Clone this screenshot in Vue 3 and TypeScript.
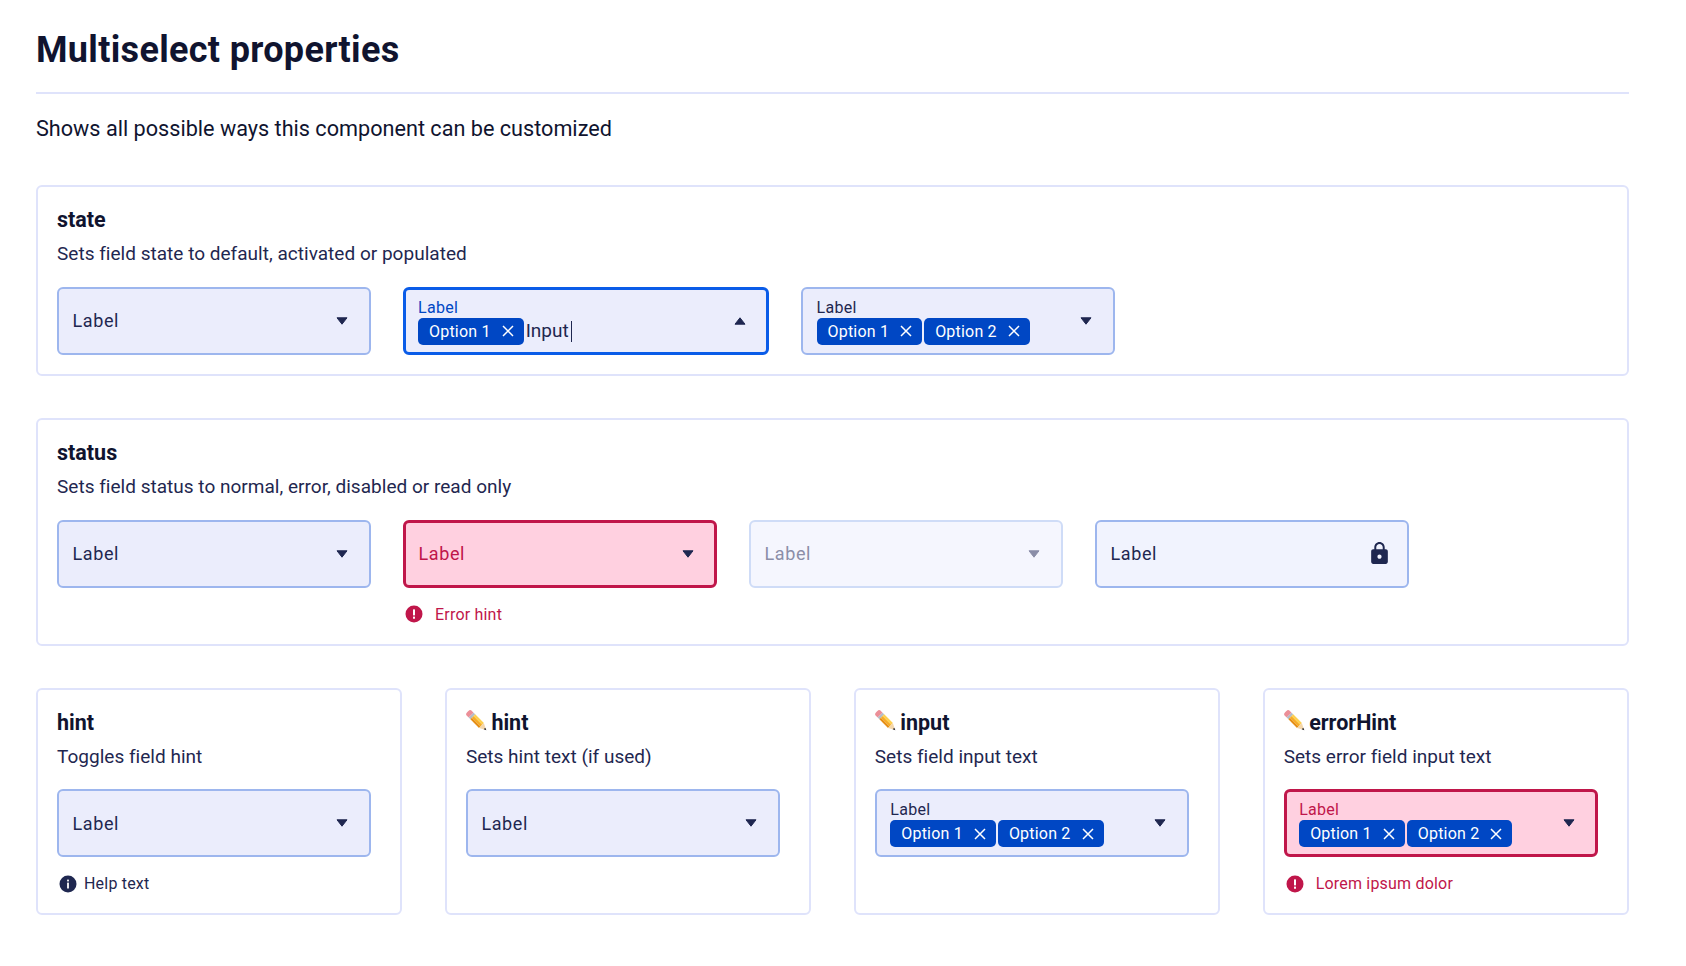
<script setup lang="ts">
// Property sheet for the multiselect field: every card is data, one template draws them all.
type Variant = 'default' | 'active' | 'error' | 'disabled' | 'readonly'

interface Field {
  variant?: Variant
  wide?: boolean
  tags?: string[]
  input?: string
  hint?: { text: string; kind: 'help' | 'error' }
}

interface Card {
  title: string
  desc: string
  pencil?: boolean
  fields: Field[]
}

const topCards: Card[] = [
  {
    title: 'state',
    desc: 'Sets field state to default, activated or populated',
    fields: [
      {},
      { variant: 'active', wide: true, tags: ['Option 1'], input: 'Input' },
      { tags: ['Option 1', 'Option 2'] },
    ],
  },
  {
    title: 'status',
    desc: 'Sets field status to normal, error, disabled or read only',
    fields: [
      {},
      { variant: 'error', hint: { text: 'Error hint', kind: 'error' } },
      { variant: 'disabled' },
      { variant: 'readonly' },
    ],
  },
]

const smallCards: Card[] = [
  {
    title: 'hint',
    desc: 'Toggles field hint',
    fields: [{ hint: { text: 'Help text', kind: 'help' } }],
  },
  { title: 'hint', desc: 'Sets hint text (if used)', pencil: true, fields: [{}] },
  {
    title: 'input',
    desc: 'Sets field input text',
    pencil: true,
    fields: [{ tags: ['Option 1', 'Option 2'] }],
  },
  {
    title: 'errorHint',
    desc: 'Sets error field input text',
    pencil: true,
    fields: [
      {
        variant: 'error',
        tags: ['Option 1', 'Option 2'],
        hint: { text: 'Lorem ipsum dolor', kind: 'error' },
      },
    ],
  },
]

const groups = [
  { cls: 'stack', cards: topCards },
  { cls: 'grid', cards: smallCards },
]
</script>

<template>
  <main class="page">
    <h1 class="heading">Multiselect properties</h1>
    <p class="lead">Shows all possible ways this component can be customized</p>

    <div v-for="group in groups" :key="group.cls" :class="group.cls">
      <section v-for="card in group.cards" :key="card.desc" class="card">
        <h2 class="card-title">
          <svg v-if="card.pencil" class="pencil" viewBox="0 0 20 20" aria-hidden="true">
            <g transform="rotate(45 10 10)">
              <path d="M-.2 6.8H2.6V13.2H-.2C-1.4 13.2-2 12.2-2 10S-1.4 6.8-.2 6.8Z" fill="#ec8f98" />
              <rect x="2.6" y="6.8" width="2.2" height="6.4" fill="#b3bcc8" />
              <rect x="4.8" y="6.8" width="11.4" height="2.2" fill="#fdd04e" />
              <rect x="4.8" y="9" width="11.4" height="2.2" fill="#f7ac24" />
              <rect x="4.8" y="11.2" width="11.4" height="2" fill="#e58e14" />
              <path d="M16.2 6.8 22.2 10 16.2 13.2Z" fill="#f4d7ac" />
              <path d="M20.2 8.9 22.6 10 20.2 11.1Z" fill="#23232c" />
            </g>
          </svg>
          <span>{{ card.title }}</span>
        </h2>
        <p class="card-desc">{{ card.desc }}</p>

        <div class="fields">
          <div v-for="(field, i) in card.fields" :key="i" class="field-wrap" :class="{ wide: field.wide }">
            <div class="field" :class="field.variant ?? 'default'">
              <div class="field-body" :class="{ populated: field.tags }">
                <span class="label" :class="{ small: field.tags }">Label</span>
                <div v-if="field.tags" class="tags">
                  <span v-for="tag in field.tags" :key="tag" class="tag">
                    {{ tag }}
                    <svg class="tag-x" viewBox="0 0 12 12" aria-hidden="true">
                      <path d="M1 1 11 11M11 1 1 11" />
                    </svg>
                  </span>
                  <span v-if="field.input" class="input">{{ field.input }}<i class="caret"></i></span>
                </div>
              </div>
              <svg v-if="field.variant === 'readonly'" class="lock" viewBox="0 0 24 24" aria-hidden="true">
                <path d="M18 8h-1V6c0-2.76-2.24-5-5-5S7 3.24 7 6v2H6c-1.1 0-2 .9-2 2v10c0 1.1.9 2 2 2h12c1.1 0 2-.9 2-2V10c0-1.1-.9-2-2-2zm-6 9c-1.1 0-2-.9-2-2s.9-2 2-2 2 .9 2 2-.9 2-2 2zm3.1-9H8.9V6c0-1.71 1.39-3.1 3.1-3.1 1.71 0 3.1 1.39 3.1 3.1v2z" />
              </svg>
              <svg v-else class="arrow" :class="{ up: field.variant === 'active' }" viewBox="0 0 12 8" aria-hidden="true">
                <path d="M1 .8h10L6 7.2Z" />
              </svg>
            </div>
            <div v-if="field.hint" class="hint" :class="field.hint.kind">
              <svg class="hint-icon" viewBox="0 0 18 18" aria-hidden="true">
                <circle cx="9" cy="9" r="8.5" />
                <template v-if="field.hint.kind === 'error'">
                  <rect x="8" y="4.2" width="2" height="6.2" rx=".6" fill="#fff" />
                  <rect x="8" y="11.6" width="2" height="2.2" rx=".6" fill="#fff" />
                </template>
                <template v-else>
                  <rect x="8.1" y="7.6" width="1.8" height="6" rx=".4" fill="#fff" />
                  <rect x="8.1" y="4.6" width="1.8" height="1.9" rx=".4" fill="#fff" />
                </template>
              </svg>
              <span>{{ field.hint.text }}</span>
            </div>
          </div>
        </div>
      </section>
    </div>
  </main>
</template>

<style scoped>
.page {
  box-sizing: border-box;
  width: 1629px;
  min-height: 966px;
  padding: 28px 0 0 36px;
  font-family: Roboto, "Liberation Sans", sans-serif;
  color: #1f2750;
  background: #fff;
}

.heading {
  margin: 0;
  padding-bottom: 20px;
  border-bottom: 2px solid #dfe3fb;
  font-size: 36px;
  line-height: 44px;
  font-weight: 700;
  letter-spacing: 0.33px;
  color: #10142f;
}

.lead {
  margin: 21px 0 42px;
  font-size: 21.65px;
  line-height: 28px;
  color: #10142f;
}

.stack {
  display: flex;
  flex-direction: column;
  gap: 42px;
  margin-bottom: 42px;
}

.grid {
  display: grid;
  grid-template-columns: repeat(4, 1fr);
  gap: 42.5px;
}

.card {
  box-sizing: border-box;
  min-height: 191px;
  padding: 20px 19px 19px;
  border: 2px solid #dfe3fb;
  border-radius: 6px;
  background: #fff;
}

.grid .card {
  height: 227px;
}

.card-title {
  display: flex;
  align-items: center;
  gap: 4px;
  margin: 0;
  font-size: 21.5px;
  line-height: 26px;
  font-weight: 700;
  color: #10142f;
}

.pencil {
  width: 21.5px;
  height: 21.5px;
  flex: none;
  margin-top: -4px;
}

.card-desc {
  margin: 8px 0 20px;
  font-size: 19px;
  line-height: 25.5px;
  letter-spacing: 0.02px;
}

.fields {
  display: flex;
  gap: 32px;
}

.field-wrap {
  width: 314px;
  flex: none;
}

.field-wrap.wide {
  width: 366px;
}

.field {
  box-sizing: border-box;
  display: flex;
  align-items: center;
  height: 68px;
  padding: 0 21px 0 13.5px;
  border: 2px solid #9db6ee;
  border-radius: 6px;
  background: #ebedfc;
}

.field.active {
  padding-left: 12px;
  padding-right: 20px;
  border: 3px solid #0a5ce8;
}

.field.error {
  padding-left: 12.5px;
  padding-right: 20px;
  border: 3px solid #c0164a;
  background: #ffd0e0;
}

.field.disabled {
  border-color: #cfdcf7;
  background: #f5f6fe;
}

.field.readonly {
  background: #f1f3fe;
}

.field-body {
  flex: 1;
  min-width: 0;
  padding-top: 1px;
}

.field-body.populated {
  padding-top: 2px;
}

.label {
  display: block;
  font-size: 18px;
  line-height: 24px;
  letter-spacing: 0.6px;
}

.label.small {
  font-size: 16px;
  line-height: 18px;
  letter-spacing: 0.3px;
}

.active .label {
  color: #0047c4;
}

.error .label {
  color: #c0164a;
}

.disabled .label {
  color: #8b8ea8;
}

.tags {
  display: flex;
  align-items: center;
  gap: 2px;
  margin-top: 1px;
}

.tag {
  display: inline-flex;
  align-items: center;
  gap: 11px;
  height: 27px;
  padding: 0 10px 0 11px;
  border-radius: 5px;
  background: #0047c4;
  color: #fff;
  font-size: 16px;
  letter-spacing: 0.2px;
  white-space: nowrap;
}

.tag-x {
  width: 12px;
  height: 12px;
  fill: none;
  stroke: #fff;
  stroke-width: 1.5;
}

.input {
  display: inline-flex;
  align-items: center;
  font-size: 19px;
  line-height: 24px;
}

.caret {
  display: block;
  width: 1px;
  height: 21px;
  margin-left: 2px;
  background: #1f2750;
}

.arrow {
  width: 12px;
  height: 8px;
  flex: none;
  fill: #1f2750;
  stroke: #1f2750;
  stroke-width: 1;
  stroke-linejoin: round;
}

.arrow.up {
  transform: rotate(180deg);
}

.disabled .arrow {
  fill: #8b8ea8;
  stroke: #8b8ea8;
}

.lock {
  width: 25px;
  height: 25px;
  flex: none;
  margin-right: -6px;
  fill: #1f2750;
}

.hint {
  display: flex;
  align-items: center;
  gap: 7px;
  margin-top: 16px;
  padding-left: 2px;
  font-size: 16px;
  line-height: 21px;
  letter-spacing: 0.2px;
}

.hint.error {
  gap: 12px;
  color: #c0164a;
}

.hint-icon {
  width: 18px;
  height: 18px;
  flex: none;
  fill: currentColor;
}
</style>

<style>
html,
body {
  background: #fff;
}
</style>
